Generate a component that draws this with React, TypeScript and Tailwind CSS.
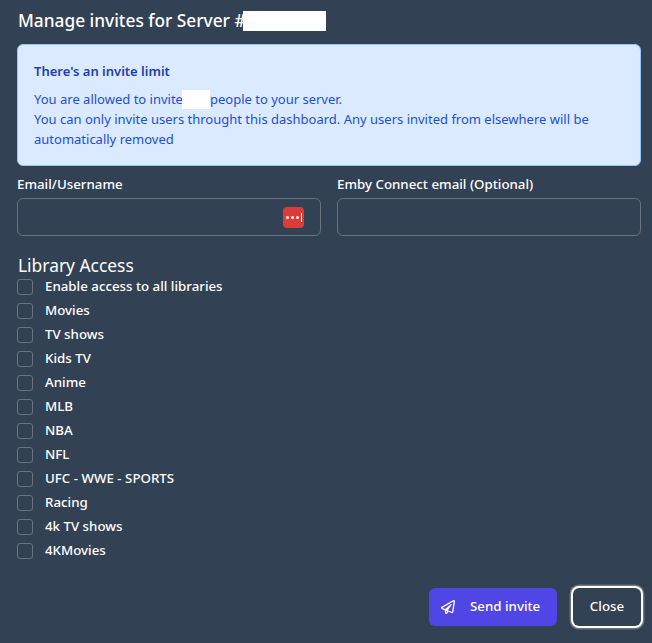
import { FaRegPaperPlane } from 'react-icons/fa'

const LIBRARIES = [
  'Enable access to all libraries',
  'Movies',
  'TV shows',
  'Kids TV',
  'Anime',
  'MLB',
  'NBA',
  'NFL',
  'UFC - WWE - SPORTS',
  'Racing',
  '4k TV shows',
  '4KMovies',
]

function Redacted({ className }: { className: string }) {
  return <span className={`inline-block bg-white ${className}`} />
}

export default function App() {
  return (
    <div className="flex h-[643px] w-[652px] flex-col overflow-hidden bg-[#334155] px-[11px] font-['Noto_Sans',sans-serif] text-white">
      <h2 className="ml-[7px] flex h-[44px] items-center pb-[2px] text-[17.3px] font-medium leading-none">
        Manage invites for Server #
        <Redacted className="ml-[-3px] h-[20px] w-[83px]" />
      </h2>

      <div className="ml-[6px] h-[122px] rounded-md border border-[#93c5fd] bg-[#dbeafe] px-4 pt-[16px]">
        <h3 className="text-[13px] font-semibold leading-5 text-[#1e40af]">
          There's an invite limit
        </h3>
        <p className="mt-2 text-[13px] leading-5 text-[#1d4ed8]">
          You are allowed to invite
          <Redacted className="ml-[-1px] h-[19px] w-[28px] align-[-5px]" />
          people to your server.
          <br />
          You can only invite users throught this dashboard. Any users invited
          from elsewhere will be automatically removed
        </p>
      </div>

      <div className="ml-[6px] mt-[8px] grid grid-cols-2 gap-4">
        <label className="block">
          <span className="block text-[13.3px] font-medium leading-5">
            Email/Username
          </span>
          <span className="relative mt-1 block">
            <input className="block h-[38px] w-full rounded-md border border-[#6b7280] bg-transparent px-3 text-sm outline-none" />
            <span className="absolute right-[17px] top-[9px] flex h-[21px] w-[21px] items-center justify-center gap-[2px] rounded-[4px] bg-[#dc3c38]">
              <i className="size-[3px] rounded-full bg-white" />
              <i className="size-[3px] rounded-full bg-white" />
              <i className="size-[3px] rounded-full bg-white" />
              <i className="h-[9px] w-[1px] bg-white" />
            </span>
          </span>
        </label>
        <label className="block">
          <span className="block text-[13.3px] font-medium leading-5">
            Emby Connect email (Optional)
          </span>
          <input className="mt-1 block h-[38px] w-full rounded-md border border-[#6b7280] bg-transparent px-3 text-sm outline-none" />
        </label>
      </div>

      <h3 className="ml-[7px] mt-[17px] text-[17.4px] font-normal leading-[24px]">
        Library Access
      </h3>
      <ul className="ml-[6px] mt-[-2px]">
        {LIBRARIES.map((name) => (
          <li key={name} className="flex h-6 items-center gap-[12px]">
            <span className="size-4 rounded-[3px] border border-[#6b7280]" />
            <span className="text-[13.3px] font-medium">{name}</span>
          </li>
        ))}
      </ul>

      <div className="mt-[25px] flex justify-end gap-4">
        <button className="flex h-[38px] w-[128px] items-center gap-[15px] rounded-md bg-[#4f46e5] pl-3 text-[13.3px] font-medium">
          <FaRegPaperPlane className="size-[14px]" />
          Send invite
        </button>
        <button className="h-[38px] w-[68px] rounded-md text-[13.3px] font-medium shadow-[0_0_0_2px_#ffffff,0_0_0_3.5px_#6b7280]">
          Close
        </button>
      </div>
    </div>
  )
}
